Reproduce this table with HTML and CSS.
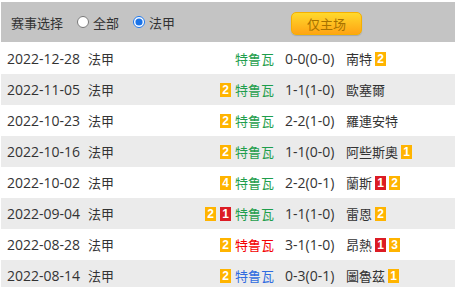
FILE: index.html
```html
<!DOCTYPE html>
<html lang="zh">
<head>
<meta charset="utf-8">
<link rel="stylesheet" href="styles.css">
</head>
<body>
<div class="wrap">
  <div class="toolbar">
    <span class="label">赛事选择</span>
    <label class="opt"><input type="radio" name="lg"><span>全部</span></label>
    <label class="opt"><input type="radio" name="lg" checked><span>法甲</span></label>
    <button class="btn">仅主场</button>
  </div>
  <div class="list">
    <div class="row">
      <span class="date">2022-12-28</span><span class="lg">法甲</span>
      <span class="home"><span class="tm green">特鲁瓦</span></span>
      <span class="score">0-0(0-0)</span>
      <span class="away"><span class="tm">南特</span><i class="b y">2</i></span>
    </div>
    <div class="row">
      <span class="date">2022-11-05</span><span class="lg">法甲</span>
      <span class="home"><i class="b y">2</i><span class="tm green">特鲁瓦</span></span>
      <span class="score">1-1(1-0)</span>
      <span class="away"><span class="tm">歐塞爾</span></span>
    </div>
    <div class="row">
      <span class="date">2022-10-23</span><span class="lg">法甲</span>
      <span class="home"><i class="b y">2</i><span class="tm green">特鲁瓦</span></span>
      <span class="score">2-2(1-0)</span>
      <span class="away"><span class="tm">羅連安特</span></span>
    </div>
    <div class="row">
      <span class="date">2022-10-16</span><span class="lg">法甲</span>
      <span class="home"><i class="b y">2</i><span class="tm green">特鲁瓦</span></span>
      <span class="score">1-1(0-0)</span>
      <span class="away"><span class="tm">阿些斯奧</span><i class="b y">1</i></span>
    </div>
    <div class="row">
      <span class="date">2022-10-02</span><span class="lg">法甲</span>
      <span class="home"><i class="b y">4</i><span class="tm green">特鲁瓦</span></span>
      <span class="score">2-2(0-1)</span>
      <span class="away"><span class="tm">蘭斯</span><i class="b r">1</i><i class="b y">2</i></span>
    </div>
    <div class="row">
      <span class="date">2022-09-04</span><span class="lg">法甲</span>
      <span class="home"><i class="b y">2</i><i class="b r">1</i><span class="tm green">特鲁瓦</span></span>
      <span class="score">1-1(1-0)</span>
      <span class="away"><span class="tm">雷恩</span><i class="b y">2</i></span>
    </div>
    <div class="row">
      <span class="date">2022-08-28</span><span class="lg">法甲</span>
      <span class="home"><i class="b y">2</i><span class="tm red">特鲁瓦</span></span>
      <span class="score">3-1(1-0)</span>
      <span class="away"><span class="tm">昂熱</span><i class="b r">1</i><i class="b y">3</i></span>
    </div>
    <div class="row">
      <span class="date">2022-08-14</span><span class="lg">法甲</span>
      <span class="home"><i class="b y">2</i><span class="tm blue">特鲁瓦</span></span>
      <span class="score">0-3(0-1)</span>
      <span class="away"><span class="tm">圖魯茲</span><i class="b y">1</i></span>
    </div>
  </div>
</div>
</body>
</html>
```
FILE: styles.css
```css
* { box-sizing: border-box; }
html, body { margin: 0; padding: 0; background: #fff; }
body {
  font-family: "Open Sans", "Noto Sans CJK SC", sans-serif;
  font-size: 14px;
  color: #333;
  overflow: hidden;
}
.wrap { padding: 2px 0 0 1px; }
.toolbar {
  height: 40px;
  background: #c4c4c4;
  display: flex;
  align-items: center;
  padding-left: 10px;
  font-size: 13px;
}
.label { margin-right: 14px; }
.opt { display: flex; align-items: center; margin-right: 14px; }
.opt input { margin: 0 4px 0 0; width: 12px; height: 12px; accent-color: #1a73e8; }
.btn {
  margin-left: 102px;
  margin-top: 3px;
  width: 71px;
  height: 23px;
  border: 1px solid #f5b000;
  border-radius: 5px;
  background: linear-gradient(#ffd92c, #ffa414);
  color: #a87200;
  font-family: "Noto Sans CJK SC", sans-serif;
  font-size: 13px;
  padding: 0;
  box-shadow: 0 1px 1px rgba(0,0,0,0.15);
}
.list { margin-top: 1px; }
.row {
  height: 31px;
  display: grid;
  grid-template-columns: 81px 60px 126px 72px 1fr;
  align-items: center;
  padding-left: 6px;
  white-space: nowrap;
}
.row:nth-child(even) { background: #ebebeb; }
.lg, .tm { font-size: 13px; }
.home { display: flex; justify-content: flex-end; align-items: center; gap: 4px; }
.score { padding-left: 11px; }
.away { display: flex; align-items: center; gap: 3px; }
.tm.green { color: #1e9e4c; }
.tm.red { color: #f40000; }
.tm.blue { color: #2f6be0; }
.b {
  font-style: normal;
  display: inline-block;
  width: 11px;
  height: 14px;
  line-height: 14px;
  text-align: center;
  color: #fff;
  font-size: 12px;
  font-weight: bold;
  font-family: "Liberation Sans", sans-serif;
}
.b.y { background: #ffb400; }
.b.r { background: #dc1c24; }
```
